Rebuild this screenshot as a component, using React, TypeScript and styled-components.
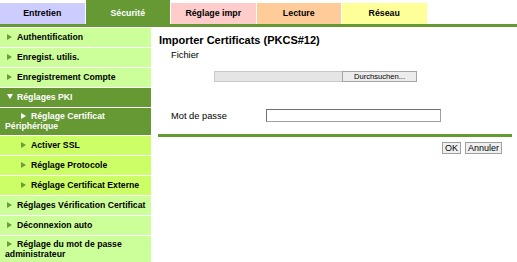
import * as React from 'react';

import styled, { createGlobalStyle, css } from 'styled-components';

type Tone = 'lavender' | 'green' | 'pink' | 'peach' | 'yellow';
type Level = 'top' | 'open' | 'openSub' | 'sub';

interface Tab {
  label: string;
  tone: Tone;
}

interface MenuItem {
  label: string;
  level: Level;
}

const tabColors: { [key in Tone]: string } = {
  lavender: '#ccccff',
  green: '#669933',
  pink: '#ffcccc',
  peach: '#ffcc99',
  yellow: '#ffff99',
};

const tabs: Tab[] = [
  { label: 'Entretien', tone: 'lavender' },
  { label: 'Sécurité', tone: 'green' },
  { label: 'Réglage impr', tone: 'pink' },
  { label: 'Lecture', tone: 'peach' },
  { label: 'Réseau', tone: 'yellow' },
];

const menu: MenuItem[] = [
  { label: 'Authentification', level: 'top' },
  { label: 'Enregist. utilis.', level: 'top' },
  { label: 'Enregistrement Compte', level: 'top' },
  { label: 'Réglages PKI', level: 'open' },
  { label: 'Réglage Certificat Périphérique', level: 'openSub' },
  { label: 'Activer SSL', level: 'sub' },
  { label: 'Réglage Protocole', level: 'sub' },
  { label: 'Réglage Certificat Externe', level: 'sub' },
  { label: 'Réglages Vérification Certificat', level: 'top' },
  { label: 'Déconnexion auto', level: 'top' },
  { label: 'Réglage du mot de passe administrateur', level: 'top' },
];

const App = () => {
  return <Page>
    <GlobalStyle />
    <TabBar>
      {tabs.map((tab) => (
        <TabItem key={tab.label} tone={tab.tone} active={tab.tone === 'green'}>
          {tab.label}
        </TabItem>
      ))}
    </TabBar>
    <Body>
      <Sidebar>
        {menu.map((item) => {
          const dark = item.level === 'open' || item.level === 'openSub';
          const indented = item.level === 'openSub' || item.level === 'sub';
          return <SideItem key={item.label} level={item.level}>
            <SideLabel indented={indented}>
              <Arrow down={item.level === 'open'} dark={dark} />
              {item.label}
            </SideLabel>
          </SideItem>;
        })}
      </Sidebar>
      <Main>
        <Title>Importer Certificats (PKCS#12)</Title>
        <FieldLabel>Fichier</FieldLabel>
        <FileRow>
          <FileField />
          <BrowseButton type="button">Durchsuchen...</BrowseButton>
        </FileRow>
        <PasswordRow>
          <RowLabel>Mot de passe</RowLabel>
          <PasswordInput type="password" />
        </PasswordRow>
        <Divider />
        <Actions>
          <ActionButton type="button">OK</ActionButton>
          <ActionButton type="button">Annuler</ActionButton>
        </Actions>
      </Main>
    </Body>
  </Page>;
};

const GlobalStyle = createGlobalStyle`
  html, body {
    margin: 0;
    padding: 0;
    height: 100%;
    overflow: hidden;
    background: #fff;
  }
`;

const Page = styled.div`
  font-family: "Liberation Sans", Arial, sans-serif;
  color: #000;
  width: 517px;
`;

const TabBar = styled.div`
  display: flex;
  align-items: flex-end;
  height: 24px;
  border-bottom: 3px solid #669933;
`;

const TabItem = styled.div<{ tone: Tone; active: boolean }>`
  box-sizing: border-box;
  width: 85.5px;
  border-right: 1px solid #fff;
  background: ${({ tone }) => tabColors[tone]};
  font-size: 8.8px;
  font-weight: bold;
  text-align: center;
  ${({ active }) => active ? css`
    height: 24px;
    padding-top: 8px;
    color: #fff;
  ` : css`
    height: 21px;
    padding-top: 5px;
    color: #000;
  `}
`;

const Body = styled.div`
  display: flex;
  align-items: flex-start;
  margin-top: 1px;
`;

const Sidebar = styled.div`
  flex: none;
  width: 151px;
  display: flex;
  flex-direction: column;
  gap: 1px;
`;

const itemColors: { [key in Level]: string } = {
  top: '#ccff99',
  open: '#669933',
  openSub: '#669933',
  sub: '#ccff66',
};

const SideItem = styled.div<{ level: Level }>`
  box-sizing: border-box;
  min-height: 19px;
  display: flex;
  align-items: center;
  padding: 3px 4px 4px 5px;
  background: ${({ level }) => itemColors[level]};
  color: ${({ level }) => (level === 'open' || level === 'openSub') ? '#fff' : '#000'};
  font-size: 8.7px;
  font-weight: bold;
  line-height: 10px;
`;

const SideLabel = styled.div<{ indented: boolean }>`
  text-indent: ${({ indented }) => indented ? '16px' : '2px'};
`;

const Arrow = styled.span<{ down: boolean; dark: boolean }>`
  display: inline-block;
  width: 0;
  height: 0;
  margin-right: 5px;
  vertical-align: 0;
  text-indent: 0;
  ${({ down, dark }) => down ? css`
    border-left: 3px solid transparent;
    border-right: 3px solid transparent;
    border-top: 5px solid #fff;
    margin-right: 4px;
    margin-bottom: 1px;
  ` : css`
    border-top: 3px solid transparent;
    border-bottom: 3px solid transparent;
    border-left: 5px solid ${dark ? '#fff' : '#6f9a3c'};
  `}
`;

const Main = styled.div`
  flex: 1;
  padding: 6px 5px 0 8px;
`;

const Title = styled.div`
  font-size: 11px;
  font-weight: bold;
  line-height: 13px;
`;

const FieldLabel = styled.div`
  margin-top: 2px;
  padding-left: 12px;
  font-size: 9.3px;
  line-height: 12px;
`;

const FileRow = styled.div`
  display: flex;
  margin: 10px 0 0 55px;
  height: 11px;
`;

const FileField = styled.div`
  box-sizing: border-box;
  width: 128px;
  height: 11px;
  background: #e5e5e5;
  border: 1px solid #c8c8c8;
  border-right: none;
`;

const BrowseButton = styled.button`
  box-sizing: border-box;
  width: 75px;
  height: 11px;
  margin: 0;
  padding: 0;
  background: #ececec;
  border: 1px solid #a5a5a5;
  font-family: "Liberation Sans", Arial, sans-serif;
  font-size: 7.6px;
  line-height: 9px;
  color: #000;
`;

const PasswordRow = styled.div`
  display: flex;
  align-items: center;
  margin-top: 27px;
  padding-left: 12px;
`;

const RowLabel = styled.div`
  width: 95px;
  font-size: 9.3px;
  line-height: 12px;
`;

const PasswordInput = styled.input`
  box-sizing: border-box;
  width: 175px;
  height: 13px;
  margin: 0;
  padding: 0;
  background: #fff;
  border: 1px solid #a0a0a0;
  border-top-color: #707070;
  border-left-color: #707070;
`;

const Divider = styled.div`
  height: 3px;
  margin: 12px 0 0 -1px;
  background: #669933;
`;

const Actions = styled.div`
  display: flex;
  justify-content: flex-end;
  gap: 4px;
  margin-top: 5px;
  padding-right: 10px;
`;

const ActionButton = styled.button`
  box-sizing: border-box;
  height: 12px;
  margin: 0;
  padding: 0 2px;
  background: #f0f0f0;
  border: 1px solid #a0a0a0;
  font-family: "Liberation Sans", Arial, sans-serif;
  font-size: 9px;
  line-height: 10px;
  color: #000;
`;

export default App;
